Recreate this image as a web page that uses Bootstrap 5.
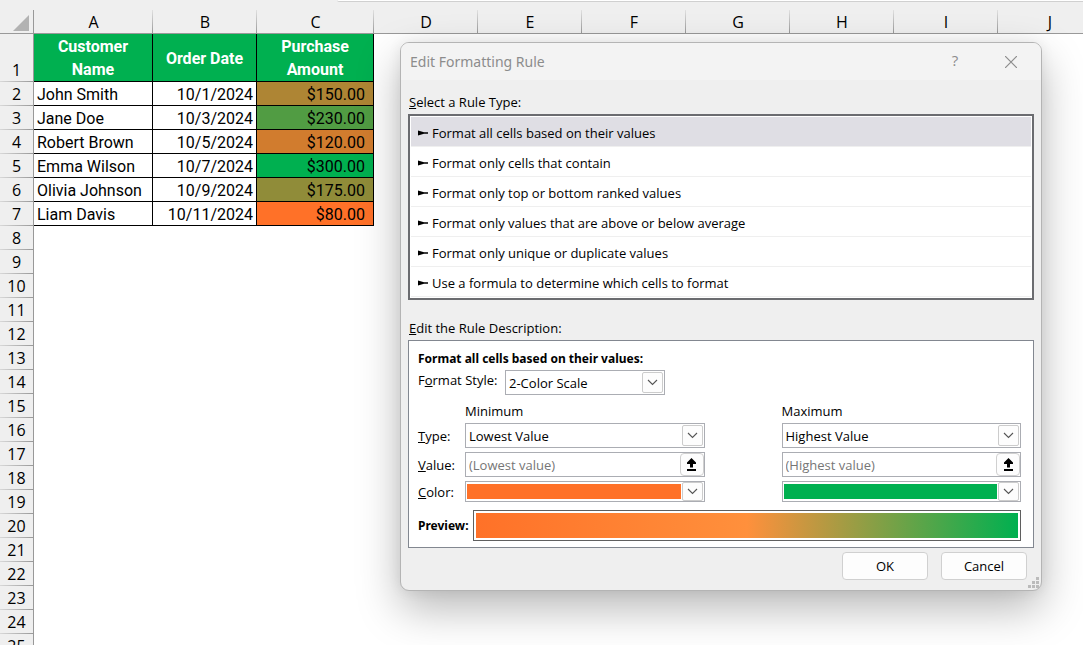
<!DOCTYPE html>
<html lang="en">
<head>
<meta charset="utf-8">
<meta name="viewport" content="width=device-width, initial-scale=1">
<title>Edit Formatting Rule</title>
<link rel="stylesheet" href="https://cdn.jsdelivr.net/npm/bootstrap@5.3.0/dist/css/bootstrap.min.css">
<style>
  body { font-family: "Open Sans", "Noto Sans", sans-serif; font-size: 13px; line-height: 16px; color: #000; background: #fff; }
  .workbook { height: 100vh; }

  /* Formula bar edge above the sheet */
  .formula-strip { height: 10px; background: #efefef; }
  .formula-edge { height: 2px; margin-left: 337px; background: #fff; border-bottom: 1px solid #d0d0d0; border-bottom-left-radius: 4px; }

  /* Sheet */
  .sheet { table-layout: fixed; width: 1102px; border-collapse: separate; border-spacing: 0; font-family: Roboto, sans-serif; font-size: 16px; line-height: 21px; }
  .sheet th, .sheet td { padding: 2px 0 0; height: 24px; }
  .sheet .col-head th { font-family: "Open Sans", sans-serif; font-weight: 400; text-align: center; vertical-align: middle; border-bottom: 1px solid #999;
    background: linear-gradient(#e0e0e0, #999) right / 1px 100% no-repeat #efefef; }
  .sheet .col-head th:first-child { background: #efefef; border-right: 1px solid #999; }
  .sheet .row-head { padding-top: 1px; line-height: 23px; font-family: "Open Sans", sans-serif; font-weight: 400; text-align: center; vertical-align: bottom; border-right: 1px solid #999;
    background: linear-gradient(90deg, #d8d8d8, #999) bottom / 100% 1px no-repeat #efefef; }
  .sheet .head-cells td { height: 48px; padding-top: 1px; background: #00b050; color: #fff; font-weight: 700; text-align: center; vertical-align: middle; line-height: 23px; border-right: 1px solid #000; border-bottom: 1px solid #000; }
  .sheet .data-row td { border-right: 1px solid #000; border-bottom: 1px solid #000; padding: 2px 3px 0; }
  .sheet .data-row td:nth-child(n+3) { text-align: right; }
  .sheet .data-row td:nth-child(4) { padding-right: 8px; }
  .v80 { background: #ff7128; } .v120 { background: #d17c2e; } .v150 { background: #ae8534; }
  .v175 { background: #908c39; } .v230 { background: #519c43; } .v300 { background: #00b050; }

  /* Dialog floating over the sheet */
  .rule-dialog { left: 400px; top: 42px; width: 642px; background: #efefef; border: 1px solid #b4b4b4; border-radius: 9px;
    box-shadow: 0 18px 44px rgba(0,0,0,.28), 0 0 14px rgba(0,0,0,.07); }
  .title-row { height: 37px; padding: 0 8px 0 9px; background: #f3f3f3; color: #8c8c8c; border-radius: 8px 8px 0 0; }
  .title-text { font-family: "Noto Sans", sans-serif; font-size: 14px; line-height: 20px; font-weight: 400; }
  .title-btn { width: 28px; height: 28px; padding: 0; border: 0; background: none; color: #8c8c8c; font-size: 15px; }
  .dialog-main { padding: 14px 7px 10px; }
  .outer-label { padding: 0 1px 4px; }
  .edit-label { margin-top: 20px; }
  .rule-list { border: 2px solid #6b6c70; background: #fff; padding: 1px; }
  .rule-item { height: 30px; padding: 3px 7px 0; border: 0; border-bottom: 1px solid #efefef; background: #fff; color: #000; text-align: left; font: inherit; }
  .rule-item.chosen { background: #dfdee4; }
  .describe { background: #fff; border: 1px solid #828790; padding: 10px 12px 6px 9px; }

  /* Fields */
  .field-grid { display: grid; grid-template-columns: 47px 1fr 77px 1fr; row-gap: 4px; align-items: center; }
  .overlap { display: grid; align-items: center; }
  .overlap > * { grid-area: 1 / 1; }
  .plain-field { width: 100%; height: 25px; padding: 0 3px; border: 1px solid #abadb3; border-radius: 0; background: #fff; color: #000; font: inherit; appearance: none; }
  .plain-field::placeholder { color: #767676; opacity: 1; }
  .style-row { padding-top: 3px; }
  .style-label { width: 87px; padding-top: 2px; }
  .style-box { width: 160px; }
  .chev { justify-self: end; width: 21px; height: 21px; margin-right: 2px; border: 1px solid #ccc; border-radius: 2px; background: #fdfdfd; pointer-events: none; }
  .chev svg, .pick svg { display: block; margin: auto; }
  .pick { justify-self: end; width: 24px; height: 23px; margin-right: 1px; padding: 0; border: 1px solid #d0d0d0; border-radius: 4px; background: #fdfdfd; }
  .color-drop { height: 21px; width: 100%; padding: 0 0 0 1px; border: 1px solid #abadb3; background: #fff; }
  .color-drop .chev { height: 19px; margin-right: 1px; }
  .swatch { height: 15px; margin-right: 1px; }
  .orange { background: #ff7128; } .green { background: #00b050; }
  .preview { height: 31px; border: 1px solid #5f5f5f; padding: 2px; margin-left: 4px; }
  .preview-fill { height: 25px; background: linear-gradient(90deg, #ff7128, #ff903c 50%, #00b050); }
  .heavy { font-family: "Noto Sans", sans-serif; font-size: 12px; font-weight: 700; }
  .foot { gap: 13px; padding-right: 7px; }
  .dlg-btn { width: 86px; height: 28px; padding: 0; border: 1px solid #d0d0d0; border-radius: 4px; background: #fdfdfd; color: #000; font: inherit; }
  .grip { right: 2px; bottom: 2px; }
</style>
</head>
<body>
<div class="workbook position-relative overflow-hidden">
  <div class="formula-strip"><div class="formula-edge"></div></div>
  <table class="sheet">
    <colgroup>
      <col style="width:34px"><col style="width:119px"><col style="width:104px"><col style="width:117px">
      <col style="width:104px"><col style="width:104px"><col style="width:104px"><col style="width:104px"><col style="width:104px"><col style="width:104px"><col style="width:104px">
    </colgroup>
    <thead>
      <tr class="col-head">
        <th><svg class="d-block ms-auto me-1" width="16" height="16" viewBox="0 0 16 16" aria-label="Select all"><path d="M16 0V16H0Z" fill="#b2b2b2"/></svg></th>
        <th>A</th><th>B</th><th>C</th><th>D</th><th>E</th><th>F</th><th>G</th><th>H</th><th>I</th><th>J</th>
      </tr>
    </thead>
    <tbody>
      <tr class="head-cells"><th class="row-head">1</th><td>Customer<br>Name</td><td>Order Date</td><td>Purchase<br>Amount</td></tr>
      <tr class="data-row"><th class="row-head">2</th><td>John Smith</td><td>10/1/2024</td><td class="v150">$150.00</td></tr>
      <tr class="data-row"><th class="row-head">3</th><td>Jane Doe</td><td>10/3/2024</td><td class="v230">$230.00</td></tr>
      <tr class="data-row"><th class="row-head">4</th><td>Robert Brown</td><td>10/5/2024</td><td class="v120">$120.00</td></tr>
      <tr class="data-row"><th class="row-head">5</th><td>Emma Wilson</td><td>10/7/2024</td><td class="v300">$300.00</td></tr>
      <tr class="data-row"><th class="row-head">6</th><td>Olivia Johnson</td><td>10/9/2024</td><td class="v175">$175.00</td></tr>
      <tr class="data-row"><th class="row-head">7</th><td>Liam Davis</td><td>10/11/2024</td><td class="v80">$80.00</td></tr>
      <tr><th class="row-head">8</th></tr>
      <tr><th class="row-head">9</th></tr>
      <tr><th class="row-head">10</th></tr>
      <tr><th class="row-head">11</th></tr>
      <tr><th class="row-head">12</th></tr>
      <tr><th class="row-head">13</th></tr>
      <tr><th class="row-head">14</th></tr>
      <tr><th class="row-head">15</th></tr>
      <tr><th class="row-head">16</th></tr>
      <tr><th class="row-head">17</th></tr>
      <tr><th class="row-head">18</th></tr>
      <tr><th class="row-head">19</th></tr>
      <tr><th class="row-head">20</th></tr>
      <tr><th class="row-head">21</th></tr>
      <tr><th class="row-head">22</th></tr>
      <tr><th class="row-head">23</th></tr>
      <tr><th class="row-head">24</th></tr>
      <tr><th class="row-head">25</th></tr>
    </tbody>
  </table>

  <svg width="0" height="0" class="position-absolute" aria-hidden="true">
    <symbol id="down" viewBox="0 0 11 7"><path d="M1 1L5.500 5.500L10 1" fill="none" stroke="#555" stroke-width="1.100"/></symbol>
    <symbol id="up" viewBox="0 0 11 13"><path d="M5.500 0L10 4.500V6H7V9.500H4V6H1V4.500ZM1 11H10V13H1Z"/></symbol>
    <symbol id="arrow" viewBox="0 0 10 6"><path d="M0 0.500L6 2.300H10V3.700H6L0 5.500Z"/></symbol>
  </svg>

  <section class="rule-dialog position-absolute" role="dialog" aria-labelledby="dlg-title">
    <header class="title-row d-flex align-items-center">
      <h1 id="dlg-title" class="title-text m-0 flex-grow-1">Edit Formatting Rule</h1>
      <button class="title-btn me-4 pb-1" type="button">?</button>
      <button class="title-btn ms-1 me-2" type="button" aria-label="Close"><svg class="d-block mx-auto" width="12" height="12" viewBox="0 0 12 12"><path d="M0 0L12 12M12 0L0 12" stroke="#8c8c8c" stroke-width="1.200"/></svg></button>
    </header>
    <div class="dialog-main">
      <div id="type-label" class="outer-label"><u>S</u>elect a Rule Type:</div>
      <div class="rule-list d-flex flex-column" role="listbox" aria-labelledby="type-label">
        <button type="button" role="option" aria-selected="true" class="rule-item chosen d-flex align-items-center gap-1"><svg width="10" height="6"><use href="#arrow"/></svg>Format all cells based on their values</button>
        <button type="button" role="option" class="rule-item d-flex align-items-center gap-1"><svg width="10" height="6"><use href="#arrow"/></svg>Format only cells that contain</button>
        <button type="button" role="option" class="rule-item d-flex align-items-center gap-1"><svg width="10" height="6"><use href="#arrow"/></svg>Format only top or bottom ranked values</button>
        <button type="button" role="option" class="rule-item d-flex align-items-center gap-1"><svg width="10" height="6"><use href="#arrow"/></svg>Format only values that are above or below average</button>
        <button type="button" role="option" class="rule-item d-flex align-items-center gap-1"><svg width="10" height="6"><use href="#arrow"/></svg>Format only unique or duplicate values</button>
        <button type="button" role="option" class="rule-item d-flex align-items-center gap-1"><svg width="10" height="6"><use href="#arrow"/></svg>Use a formula to determine which cells to format</button>
      </div>
      <div class="outer-label edit-label"><u>E</u>dit the Rule Description:</div>
      <div class="describe">
        <div class="heavy">Format all cells based on their values:</div>
        <div class="style-row d-flex align-items-start">
          <label for="fstyle" class="style-label">F<u>o</u>rmat Style:</label>
          <div class="overlap style-box"><select id="fstyle" class="plain-field"><option>2-Color Scale</option></select><span class="chev d-flex"><svg width="11" height="7"><use href="#down"/></svg></span></div>
        </div>
        <div class="field-grid mt-2">
          <span></span><span>Minimum</span><span></span><span>Maximum</span>
          <label for="mintype"><u>T</u>ype:</label>
          <div class="overlap"><select id="mintype" class="plain-field"><option>Lowest Value</option></select><span class="chev d-flex"><svg width="11" height="7"><use href="#down"/></svg></span></div>
          <span></span>
          <div class="overlap"><select aria-label="Maximum type" class="plain-field"><option>Highest Value</option></select><span class="chev d-flex"><svg width="11" height="7"><use href="#down"/></svg></span></div>
          <label for="minvalue"><u>V</u>alue:</label>
          <div class="overlap"><input id="minvalue" class="plain-field" placeholder="(Lowest value)"><button type="button" class="pick" aria-label="Pick cell"><svg width="11" height="13"><use href="#up"/></svg></button></div>
          <span></span>
          <div class="overlap"><input aria-label="Maximum value" class="plain-field" placeholder="(Highest value)"><button type="button" class="pick" aria-label="Pick cell"><svg width="11" height="13"><use href="#up"/></svg></button></div>
          <label for="mincolor"><u>C</u>olor:</label>
          <button id="mincolor" type="button" class="color-drop d-flex align-items-center"><span class="swatch orange flex-grow-1"></span><span class="chev d-flex"><svg width="11" height="7"><use href="#down"/></svg></span></button>
          <span></span>
          <button type="button" aria-label="Maximum color" class="color-drop d-flex align-items-center"><span class="swatch green flex-grow-1"></span><span class="chev d-flex"><svg width="11" height="7"><use href="#down"/></svg></span></button>
        </div>
        <div class="d-flex align-items-center mt-2">
          <div class="heavy">Preview:</div>
          <div class="preview flex-grow-1"><div class="preview-fill"></div></div>
        </div>
      </div>
      <div class="d-flex justify-content-end mt-1 foot">
        <button type="button" class="dlg-btn">OK</button>
        <button type="button" class="dlg-btn">Cancel</button>
      </div>
    </div>
    <svg class="grip position-absolute" width="11" height="11" viewBox="0 0 11 11" fill="#bbb" aria-hidden="true"><path d="M8 0h3v3h-3zM4 4h3v3h-3zM8 4h3v3h-3zM0 8h3v3h-3zM4 8h3v3h-3zM8 8h3v3h-3z"/></svg>
  </section>
</div>
<script src="https://cdn.jsdelivr.net/npm/bootstrap@5.3.0/dist/js/bootstrap.bundle.min.js"></script>
</body>
</html>
